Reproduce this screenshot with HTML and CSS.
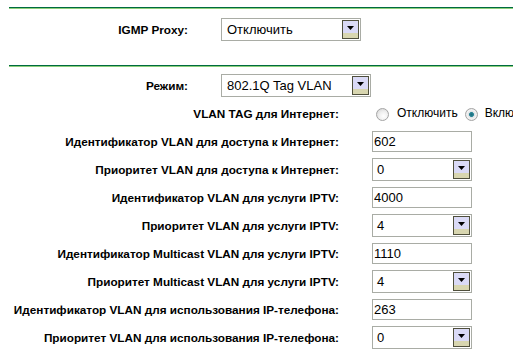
FILE: index.html
```html
<!DOCTYPE html>
<html lang="ru">
<head>
  <meta charset="UTF-8">
  <title>IPTV</title>
  <link rel="stylesheet" href="styles.css">
</head>
<body>
  <div class="page">
    <div class="rule"></div>

    <div class="form form-top">
      <label class="label">IGMP Proxy:</label>
      <div class="select w140">
        <span class="value">Отключить</span>
        <span class="drop"><svg width="7" height="4" viewBox="0 0 7 4"><path d="M0 0h7L3.5 4z" fill="#000"/></svg></span>
      </div>
    </div>

    <div class="rule rule-mid"></div>

    <div class="form form-mode">
      <label class="label">Режим:</label>
      <div class="select w150">
        <span class="value">802.1Q Tag VLAN</span>
        <span class="drop"><svg width="7" height="4" viewBox="0 0 7 4"><path d="M0 0h7L3.5 4z" fill="#000"/></svg></span>
      </div>
    </div>

    <div class="form form-vlan">
      <label class="label">VLAN TAG для Интернет:</label>
      <div class="radios">
        <span class="radio"></span><span class="radio-text">Отключить</span>
        <span class="radio checked"></span><span class="radio-text">Включить</span>
      </div>

      <label class="label">Идентификатор VLAN для доступа к Интернет:</label>
      <input class="field" type="text" value="602">

      <label class="label">Приоритет VLAN для доступа к Интернет:</label>
      <div class="select w100">
        <span class="value">0</span>
        <span class="drop"><svg width="7" height="4" viewBox="0 0 7 4"><path d="M0 0h7L3.5 4z" fill="#000"/></svg></span>
      </div>

      <label class="label">Идентификатор VLAN для услуги IPTV:</label>
      <input class="field" type="text" value="4000">

      <label class="label">Приоритет VLAN для услуги IPTV:</label>
      <div class="select w100">
        <span class="value">4</span>
        <span class="drop"><svg width="7" height="4" viewBox="0 0 7 4"><path d="M0 0h7L3.5 4z" fill="#000"/></svg></span>
      </div>

      <label class="label">Идентификатор Multicast VLAN для услуги IPTV:</label>
      <input class="field" type="text" value="1110">

      <label class="label">Приоритет Multicast VLAN для услуги IPTV:</label>
      <div class="select w100">
        <span class="value">4</span>
        <span class="drop"><svg width="7" height="4" viewBox="0 0 7 4"><path d="M0 0h7L3.5 4z" fill="#000"/></svg></span>
      </div>

      <label class="label">Идентификатор VLAN для использования IP-телефона:</label>
      <input class="field" type="text" value="263">

      <label class="label">Приоритет VLAN для использования IP-телефона:</label>
      <div class="select w100">
        <span class="value">0</span>
        <span class="drop"><svg width="7" height="4" viewBox="0 0 7 4"><path d="M0 0h7L3.5 4z" fill="#000"/></svg></span>
      </div>
    </div>
  </div>
</body>
</html>
```

FILE: styles.css
```css
* {
  margin: 0;
  padding: 0;
  box-sizing: border-box;
}
body {
  background: #fff;
  font-family: 'Liberation Sans', Arial, sans-serif;
  color: #000;
  overflow: hidden;
}
.page {
  width: 513px;
  padding-top: 7px;
  white-space: nowrap;
}

/* green double line */
.rule {
  margin-left: 9px;
  height: 2px;
  border-top: 1px solid #006a40;
  border-bottom: 1px solid #8ccf7a;
}
.rule-mid {
  margin-top: 22px;
}

.form {
  display: grid;
  grid-auto-rows: 28px;
  column-gap: 33px;
  align-items: center;
}
.form-top {
  grid-template-columns: 188px auto;
  margin-top: 6px;
}
.form-mode {
  grid-template-columns: 188px auto;
  margin-top: 4px;
}
.form-vlan {
  grid-template-columns: 339px auto;
}

.label {
  font-size: 11.75px;
  font-weight: bold;
  text-align: right;
}

/* fake old style dropdown */
.select {
  position: relative;
  height: 23px;
  border: 1px solid #a9aca5;
  background: #fff;
  font-size: 13px;
  line-height: 21px;
  padding-left: 5px;
}
.w140 { width: 140px; }
.w150 { width: 150px; }
.w100 { width: 100px; padding-left: 4px; }

.drop {
  position: absolute;
  top: 1px;
  right: 1px;
  width: 17px;
  height: 19px;
  border: 1px solid #4f4f3c;
  background: linear-gradient(#dadaf6 0, #dadaf6 12px, #d8d6b0 12px);
  display: flex;
  justify-content: center;
  padding-top: 5px;
}
.drop svg {
  display: block;
}

.field {
  width: 100px;
  height: 21px;
  border: 1px solid #a9aca5;
  font-family: 'Liberation Sans', Arial, sans-serif;
  font-size: 13px;
  padding-left: 1px;
  color: #000;
  outline: none;
}

.radios {
  display: flex;
  align-items: center;
  font-size: 12px;
  padding-left: 4px;
}
.radio {
  width: 13px;
  height: 13px;
  border-radius: 50%;
  border: 1px solid #a4a4a4;
  background: radial-gradient(circle at 60% 65%, #fff 0, #f0f0f0 45%, #cfcfcf 100%);
  margin-right: 8px;
  margin-top: 3px;
}
.radio.checked {
  background: radial-gradient(circle, #1f6f7f 0, #2a8696 28%, #d8dde0 32%, #f4f4f4 60%, #c8c8c8 100%);
  margin-left: 7px;
  margin-right: 7px;
}
.radio-text {
  line-height: 14px;
}
```
